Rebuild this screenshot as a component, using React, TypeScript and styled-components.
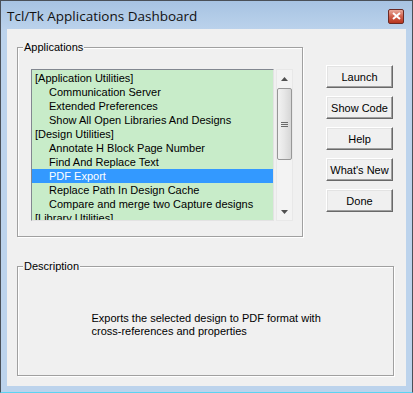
import styled, { createGlobalStyle } from "styled-components";

const GlobalStyle = createGlobalStyle`
  html, body {
    margin: 0;
    padding: 0;
    background: #ffffff;
  }
  * {
    box-sizing: border-box;
  }
`;

const Window = styled.div`
  width: 413px;
  height: 393px;
  display: flex;
  flex-direction: column;
  border: 1px solid #4a5058;
  border-bottom: 1px solid #5cd3f2;
  background: linear-gradient(to bottom, #a7c3e2 0px, #bcd3ec 30px, #bcd3ec 100%);
  font-family: "Liberation Sans", Arial, sans-serif;
  font-size: 11px;
  color: #000;
`;

const TitleBar = styled.div`
  height: 28px;
  display: flex;
  align-items: center;
  justify-content: space-between;
  padding: 0 8px 0 6px;
`;

const Title = styled.span`
  font-family: "Open Sans", "Noto Sans", sans-serif;
  font-size: 13.5px;
  color: #111111;
  margin-top: 1px;
`;

const CloseButton = styled.div`
  width: 16px;
  height: 15px;
  margin-top: 2px;
  border: 1px solid #6b2a24;
  border-radius: 2px;
  background: linear-gradient(to bottom, #e9a99a 0%, #d0604c 50%, #b8361f 100%);
  display: flex;
  align-items: center;
  justify-content: center;
`;

const Client = styled.div`
  flex: 1;
  margin: 0 6px 6px 6px;
  background: #f0f0f0;
  display: flex;
  flex-direction: column;
  gap: 29px;
  padding: 18px 0 0 10px;
`;

const TopRow = styled.div`
  display: flex;
  align-items: flex-start;
`;

const GroupBox = styled.div<{ $w: number; $h: number }>`
  position: relative;
  width: ${(p) => p.$w}px;
  height: ${(p) => p.$h}px;
  border: 1px solid #a0a0a0;
  box-shadow: 1px 1px 0 #ffffff, inset 1px 1px 0 #ffffff;
`;

const Caption = styled.span`
  position: absolute;
  top: -8px;
  left: 5px;
  padding: 0 1px;
  background: #f0f0f0;
  line-height: 14px;
`;

const ListArea = styled.div`
  display: flex;
  gap: 2px;
  margin: 21px 0 0 13px;
`;

const ListBox = styled.div`
  width: 243px;
  height: 152px;
  border: 1px solid #828790;
  border-right-color: #e3e3e3;
  border-bottom-color: #e3e3e3;
  background: #c8ecc9;
  overflow: hidden;
  padding-top: 1px;
`;

const Item = styled.div<{ $indent?: boolean; $selected?: boolean }>`
  height: 14px;
  line-height: 14px;
  white-space: nowrap;
  padding-left: ${(p) => (p.$indent ? 17 : 3)}px;
  background: ${(p) => (p.$selected ? "#3399ff" : "transparent")};
  color: ${(p) => (p.$selected ? "#ffffff" : "#000000")};
`;

const ScrollBar = styled.div`
  width: 17px;
  height: 152px;
  background: #f3f3f3;
  border: 1px solid #e8e8e8;
  display: flex;
  flex-direction: column;
  align-items: center;
`;

const Arrow = styled.div`
  height: 17px;
  width: 100%;
  display: flex;
  align-items: center;
  justify-content: center;
`;

const Thumb = styled.div`
  width: 15px;
  height: 72px;
  margin-top: 1px;
  border: 1px solid #979797;
  border-radius: 2px;
  background: linear-gradient(to right, #f2f2f2 0%, #e6e6e6 50%, #d6d6d6 100%);
  display: flex;
  align-items: center;
  justify-content: center;
`;

const Spacer = styled.div`
  flex: 1;
`;

const ButtonColumn = styled.div`
  display: flex;
  flex-direction: column;
  gap: 8px;
  margin: 18px 0 0 23px;
`;

const Button = styled.div`
  width: 67px;
  height: 23px;
  background: #f0f0f0;
  border: 1px solid;
  border-color: #ffffff #696969 #696969 #ffffff;
  box-shadow: inset -1px -1px 0 #a0a0a0, inset 1px 1px 0 #e3e3e3;
  display: flex;
  align-items: center;
  justify-content: center;
  line-height: 14px;
`;

const DescBody = styled.div`
  height: 100%;
  display: flex;
  align-items: center;
  justify-content: center;
  padding: 8px 0 0 4px;
`;

const DescText = styled.div`
  line-height: 13px;
  width: 232px;
`;

const items: { label: string; indent?: boolean }[] = [
  { label: "[Application Utilities]" },
  { label: "Communication Server", indent: true },
  { label: "Extended Preferences", indent: true },
  { label: "Show All Open Libraries And Designs", indent: true },
  { label: "[Design Utilities]" },
  { label: "Annotate H Block Page Number", indent: true },
  { label: "Find And Replace Text", indent: true },
  { label: "PDF Export", indent: true },
  { label: "Replace Path In Design Cache", indent: true },
  { label: "Compare and merge two Capture designs", indent: true },
  { label: "[Library Utilities]" },
];

const buttons = ["Launch", "Show Code", "Help", "What's New", "Done"];

export default function App() {
  return (
    <>
      <GlobalStyle />
      <Window>
        <TitleBar>
          <Title>Tcl/Tk Applications Dashboard</Title>
          <CloseButton>
            <svg width="9" height="8" viewBox="0 0 9 8">
              <path d="M1 1 L8 7 M8 1 L1 7" stroke="#ffffff" strokeWidth="2" />
            </svg>
          </CloseButton>
        </TitleBar>
        <Client>
          <TopRow>
            <GroupBox $w={286} $h={190}>
              <Caption>Applications</Caption>
              <ListArea>
                <ListBox>
                  {items.map((it) => (
                    <Item
                      key={it.label}
                      $indent={it.indent}
                      $selected={it.label === "PDF Export"}
                    >
                      {it.label}
                    </Item>
                  ))}
                </ListBox>
                <ScrollBar>
                  <Arrow>
                    <svg width="7" height="4" viewBox="0 0 7 4">
                      <path d="M0 4 L3.5 0 L7 4 Z" fill="#505050" />
                    </svg>
                  </Arrow>
                  <Thumb>
                    <svg width="7" height="7" viewBox="0 0 7 7">
                      <path d="M0 1.5 H7 M0 3.5 H7 M0 5.5 H7" stroke="#6a6a6a" strokeWidth="1" />
                    </svg>
                  </Thumb>
                  <Spacer />
                  <Arrow>
                    <svg width="7" height="4" viewBox="0 0 7 4">
                      <path d="M0 0 L3.5 4 L7 0 Z" fill="#505050" />
                    </svg>
                  </Arrow>
                </ScrollBar>
              </ListArea>
            </GroupBox>
            <ButtonColumn>
              {buttons.map((b) => (
                <Button key={b}>{b}</Button>
              ))}
            </ButtonColumn>
          </TopRow>
          <GroupBox $w={377} $h={110}>
            <Caption>Description</Caption>
            <DescBody>
              <DescText>
                Exports the selected design to PDF format with cross-references and properties
              </DescText>
            </DescBody>
          </GroupBox>
        </Client>
      </Window>
    </>
  );
}
